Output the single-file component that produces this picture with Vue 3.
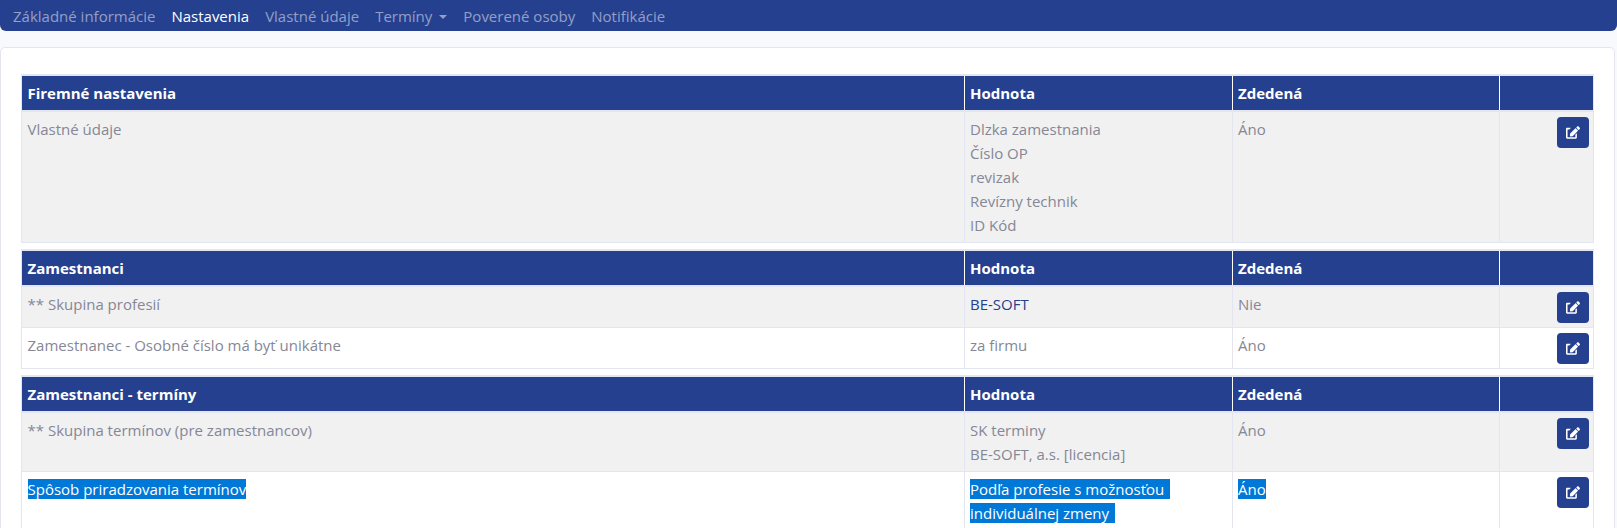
<script setup>
const navItems = [
  { label: 'Základné informácie' },
  { label: 'Nastavenia', active: true },
  { label: 'Vlastné údaje' },
  { label: 'Termíny', caret: true },
  { label: 'Poverené osoby' },
  { label: 'Notifikácie' },
]
const tables = [
  {
    title: 'Firemné nastavenia',
    rows: [
      { name: 'Vlastné údaje', values: ['Dlzka zamestnania', 'Číslo OP', 'revizak', 'Revízny technik', 'ID Kód'], inherited: 'Áno', shaded: true },
    ],
  },
  {
    title: 'Zamestnanci',
    rows: [
      { name: '** Skupina profesií', values: ['BE-SOFT'], inherited: 'Nie', shaded: true, link: true },
      { name: 'Zamestnanec - Osobné číslo má byť unikátne', values: ['za firmu'], inherited: 'Áno' },
    ],
  },
  {
    title: 'Zamestnanci - termíny',
    rows: [
      { name: '** Skupina termínov (pre zamestnancov)', values: ['SK terminy', 'BE-SOFT, a.s. [licencia]'], inherited: 'Áno', shaded: true },
      { name: 'Spôsob priradzovania termínov', values: ['Podľa profesie s možnosťou', 'individuálnej zmeny'], inherited: 'Áno', selected: true },
    ],
  },
]
</script>

<template>
  <div class="page">
    <nav class="navbar">
      <a v-for="item in navItems" :key="item.label" class="nav-link" :class="{ active: item.active }">
        {{ item.label }}<i v-if="item.caret" class="caret"></i>
      </a>
    </nav>
    <section class="card">
      <table v-for="table in tables" :key="table.title" class="grid">
        <colgroup>
          <col class="c1" /><col class="c2" /><col class="c3" /><col class="c4" />
        </colgroup>
        <thead>
          <tr>
            <th>{{ table.title }}</th>
            <th>Hodnota</th>
            <th>Zdedená</th>
            <th></th>
          </tr>
        </thead>
        <tbody>
          <tr v-for="row in table.rows" :key="row.name" :class="{ shaded: row.shaded, selected: row.selected }">
            <td><span class="mark">{{ row.name }}</span></td>
            <td>
              <div v-for="value in row.values" :key="value" :class="{ link: row.link }"><span class="mark trail">{{ value }}</span></div>
            </td>
            <td><span class="mark">{{ row.inherited }}</span></td>
            <td class="actions">
              <button class="edit" type="button" aria-label="Upraviť">
                <svg viewBox="0 0 576 512" width="14" height="13" fill="currentColor"><path d="M402.6 83.2l90.2 90.2c3.8 3.8 3.8 10 0 13.8L274.4 405.6l-92.8 10.3c-12.4 1.4-22.9-9.1-21.5-21.5l10.3-92.8L388.8 83.2c3.8-3.8 10-3.8 13.8 0zm162-22.9l-48.8-48.8c-15.2-15.2-39.9-15.2-55.2 0l-35.4 35.4c-3.8 3.8-3.8 10 0 13.8l90.2 90.2c3.8 3.8 10 3.8 13.8 0l35.4-35.4c15.2-15.3 15.2-40 0-55.2zM384 346.2V448H64V128h73.1c3.2 0 6.2-1.3 8.5-3.5l40-40c7.6-7.6 2.2-20.5-8.5-20.5H48C21.5 64 0 85.5 0 112v352c0 26.5 21.5 48 48 48h352c26.5 0 48-21.5 48-48V306.2c0-10.7-12.9-16-20.5-8.5l-40 40c-2.2 2.3-3.5 5.3-3.5 8.5z"/></svg>
              </button>
            </td>
          </tr>
        </tbody>
      </table>
    </section>
  </div>
</template>

<style>
html, body { margin: 0; background: #f8f9fc; overflow: hidden; }
</style>

<style scoped>
.page {
  height: 528px;
  overflow: hidden;
  font-family: "Open Sans", "Noto Sans", sans-serif;
  font-size: 15px;
  line-height: 24px;
  color: #858796;
  background: #f8f9fc;
}
.navbar {
  display: flex;
  height: 31px;
  padding: 0 5px;
  align-items: center;
  background: #25408f;
  border-radius: 0 0 6px 6px;
  box-sizing: border-box;
}
.nav-link {
  padding: 0 8px;
  color: rgba(255, 255, 255, 0.5);
  white-space: nowrap;
}
.nav-link.active { color: #fff; }
.caret {
  display: inline-block;
  margin-left: 7px;
  vertical-align: 3px;
  border-top: 4px solid currentColor;
  border-left: 4px solid transparent;
  border-right: 4px solid transparent;
}
.card {
  margin: 16px 2px 0 0;
  padding: 26px 20px 20px 20px;
  background: #fff;
  border: 1px solid #e3e6f0;
  border-radius: 5px;
}
.grid {
  width: 100%;
  table-layout: fixed;
  border-collapse: collapse;
  margin-bottom: 6px;
}
.c1 { width: 943px; }
.c2 { width: 268px; }
.c3 { width: 267px; }
th, td {
  border: 1px solid #e3e6f0;
  text-align: left;
  vertical-align: top;
}
th {
  height: 34px;
  box-sizing: border-box;
  padding: 5px;
  font-weight: 700;
  color: #fff;
  background: #25408f;
  border-top-width: 2px;
  border-bottom-width: 2px;
  border-left-color: #fff;
  border-right-color: #fff;
}
th:first-child { border-left-color: #e3e6f0; padding-left: 5.5px; }
th:last-child { border-right-color: #e3e6f0; }
td { padding: 5px; }
td:first-child { padding-left: 5.5px; }
.shaded td { background: #f1f1f1; }
.link { color: #25408f; }
td.actions { text-align: right; padding: 5px 4px 4px 5px; }
.edit {
  display: inline-flex;
  align-items: center;
  justify-content: center;
  width: 32px;
  height: 31px;
  padding: 0;
  color: #fff;
  background: #25408f;
  border: 0;
  border-radius: 4px;
  vertical-align: top;
}
.selected .mark { color: #fff; background: #0078d7; }
.selected .trail { padding-right: 6px; }
</style>
